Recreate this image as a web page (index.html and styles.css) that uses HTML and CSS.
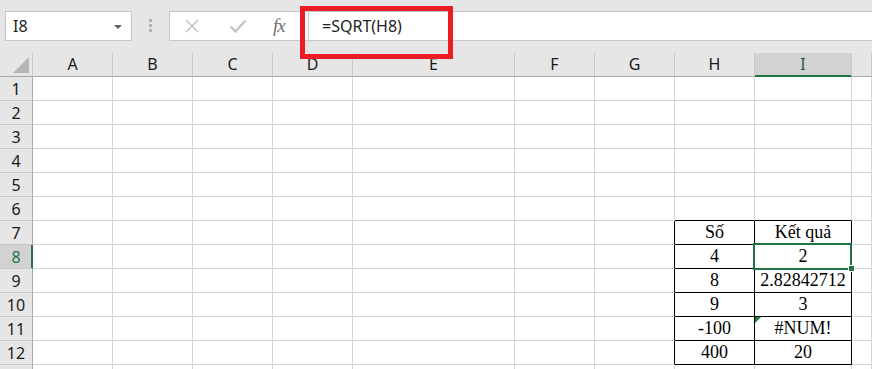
FILE: index.html
```html
<!DOCTYPE html>
<html>
<head>
<meta charset="utf-8">
<link rel="stylesheet" href="styles.css">
</head>
<body>
<div class="app">
  <div class="toolbar">
    <div class="namebox"><span class="nb-text">I8</span><span class="nb-arrow"></span></div>
    <div class="dots"><i></i><i></i><i></i></div>
    <div class="fbar">
      <div class="fbtns">
        <svg class="ic-x" width="16" height="16" viewBox="0 0 16 16"><path d="M2 2 L14 14 M14 2 L2 14" stroke="#c4c4c4" stroke-width="1.6" fill="none"/></svg>
        <svg class="ic-ok" width="18" height="16" viewBox="0 0 18 16"><path d="M1.5 8.5 L6.5 13.5 L16.5 2.5" stroke="#c4c4c4" stroke-width="2.4" fill="none"/></svg>
        <span class="fx">fx</span>
      </div>
      <div class="finput">=SQRT(H8)</div>
    </div>
    <div class="redbox"></div>
  </div>
  <div class="sheet">
    <div class="row head">
      <div class="corner"><span class="tri"></span></div>
      <div class="ch">A</div><div class="ch">B</div><div class="ch">C</div><div class="ch">D</div><div class="ch">E</div><div class="ch">F</div><div class="ch">G</div><div class="ch">H</div><div class="ch sel">I</div><div class="ch"></div>
    </div>
    <div class="row"><div class="rh">1</div><div></div><div></div><div></div><div></div><div></div><div></div><div></div><div></div><div></div><div></div></div>
    <div class="row"><div class="rh">2</div><div></div><div></div><div></div><div></div><div></div><div></div><div></div><div></div><div></div><div></div></div>
    <div class="row"><div class="rh">3</div><div></div><div></div><div></div><div></div><div></div><div></div><div></div><div></div><div></div><div></div></div>
    <div class="row"><div class="rh">4</div><div></div><div></div><div></div><div></div><div></div><div></div><div></div><div></div><div></div><div></div></div>
    <div class="row"><div class="rh">5</div><div></div><div></div><div></div><div></div><div></div><div></div><div></div><div></div><div></div><div></div></div>
    <div class="row"><div class="rh">6</div><div></div><div></div><div></div><div></div><div></div><div></div><div></div><div class="tt"></div><div class="tt"></div><div></div></div>
    <div class="row"><div class="rh">7</div><div></div><div></div><div></div><div></div><div></div><div></div><div class="tl"></div><div class="t">Số</div><div class="t">Kết quả</div><div></div></div>
    <div class="row"><div class="rh sel">8</div><div></div><div></div><div></div><div></div><div></div><div></div><div class="tl"></div><div class="t">4</div><div class="t active">2<span class="handle"></span></div><div></div></div>
    <div class="row"><div class="rh">9</div><div></div><div></div><div></div><div></div><div></div><div></div><div class="tl"></div><div class="t">8</div><div class="t">2.82842712</div><div></div></div>
    <div class="row"><div class="rh">10</div><div></div><div></div><div></div><div></div><div></div><div></div><div class="tl"></div><div class="t">9</div><div class="t">3</div><div></div></div>
    <div class="row"><div class="rh">11</div><div></div><div></div><div></div><div></div><div></div><div></div><div class="tl"></div><div class="t">-100</div><div class="t err">#NUM!</div><div></div></div>
    <div class="row"><div class="rh">12</div><div></div><div></div><div></div><div></div><div></div><div></div><div class="tl"></div><div class="t">400</div><div class="t">20</div><div></div></div>
    <div class="row"><div class="rh"></div><div></div><div></div><div></div><div></div><div></div><div></div><div></div><div></div><div></div><div></div></div>
  </div>
</div>
</body>
</html>
```
FILE: styles.css
```css
html, body {
  margin: 0;
  padding: 0;
  background: #e6e6e6;
  overflow: hidden;
}
.app {
  width: 872px;
  height: 369px;
  overflow: hidden;
  font-family: "Noto Sans", "Open Sans", sans-serif;
  font-size: 16px;
  color: #1a1a1a;
}
.toolbar {
  position: relative;
  height: 53px;
  box-sizing: border-box;
  padding-top: 11px;
  display: flex;
  align-items: flex-start;
}
.namebox {
  margin-left: 5px;
  width: 127px;
  height: 30px;
  box-sizing: border-box;
  border: 1px solid #c6c6c6;
  background: #fff;
  display: flex;
  align-items: center;
  justify-content: space-between;
  padding: 0 9px 0 7px;
}
.nb-text {
  line-height: 28px;
  color: #222;
}
.nb-arrow {
  width: 0;
  height: 0;
  border-left: 4px solid transparent;
  border-right: 4px solid transparent;
  border-top: 4px solid #606060;
  margin-top: 1px;
}
.dots {
  margin-left: 17px;
  margin-top: 8px;
  display: flex;
  flex-direction: column;
  gap: 2px;
}
.dots i {
  display: block;
  width: 3px;
  height: 3px;
  background: #b0b0b0;
}
.fbar {
  margin-left: 17px;
  flex: 1;
  height: 30px;
  box-sizing: border-box;
  border: 1px solid #c6c6c6;
  border-right: none;
  background: #fff;
  display: flex;
}
.fbtns {
  width: 139px;
  display: flex;
  align-items: center;
  border-right: 1px solid #d0d0d0;
  box-sizing: border-box;
}
.ic-x { margin-left: 14px; }
.ic-ok { margin-left: 29px; }
.fx {
  margin-left: 26px;
  font-family: "Liberation Serif", serif;
  font-style: italic;
  font-size: 19px;
  color: #707070;
  letter-spacing: -1px;
  line-height: 28px;
}
.finput {
  padding-left: 13px;
  line-height: 28px;
  color: #222;
}
.redbox {
  position: absolute;
  left: 300px;
  top: 6px;
  width: 153px;
  height: 53px;
  box-sizing: border-box;
  border: 5px solid #ed1c24;
  z-index: 5;
}
.sheet {
  background: #fff;
}
.row {
  display: grid;
  grid-template-columns: 33px 80px 80px 80px 80px 162px 80px 80px 80px 97px 1fr;
  height: 24px;
}
.row > div {
  box-sizing: border-box;
  height: 24px;
  border-right: 1px solid #d4d4d4;
  border-bottom: 1px solid #d4d4d4;
  position: relative;
}
.head > div {
  background: #e6e6e6;
  border-right: 1px solid #c8c8c8;
  border-bottom: 1px solid #a8a8a8;
  text-align: center;
  line-height: 23px;
  color: #1a1a1a;
}
.head > div.corner {
  border-right: 1px solid #c8c8c8;
}
.tri {
  position: absolute;
  right: 3px;
  bottom: 3px;
  width: 0;
  height: 0;
  border-left: 16px solid transparent;
  border-bottom: 16px solid #b5b5b5;
}
.head > .ch.sel {
  background: #d2d2d2;
  border-bottom: 1px solid #217346;
  box-shadow: inset 0 -1px 0 #217346;
  color: #1e5c38;
}
.row > .rh {
  background: #e6e6e6;
  border-right: 1px solid #a8a8a8;
  border-bottom: 1px solid #c8c8c8;
  text-align: center;
  line-height: 24px;
  color: #1a1a1a;
}
.row > .rh.sel {
  background: #d2d2d2;
  border-right: 1px solid #217346;
  box-shadow: inset -1px 0 0 #217346;
  color: #217346;
}
.row > .tl {
  border-right-color: #000;
}
.row > .tt {
  border-bottom-color: #000;
}
.row > .t {
  border-right-color: #000;
  border-bottom-color: #000;
  font-family: "Liberation Serif", "Times New Roman", serif;
  font-size: 18px;
  line-height: 23px;
  text-align: center;
  color: #000;
}
.row > .active {
  z-index: 3;
}
.active::before {
  content: "";
  position: absolute;
  left: -2px;
  top: -2px;
  right: -1px;
  bottom: -2px;
  border: 2px solid #217346;
  pointer-events: none;
}
.handle {
  position: absolute;
  right: -4px;
  bottom: -4px;
  width: 5px;
  height: 5px;
  background: #217346;
  border: 1px solid #fff;
}
.err::before {
  content: "";
  position: absolute;
  left: 0;
  top: 0;
  width: 0;
  height: 0;
  border-top: 6px solid #1e7b34;
  border-right: 6px solid transparent;
}
```
